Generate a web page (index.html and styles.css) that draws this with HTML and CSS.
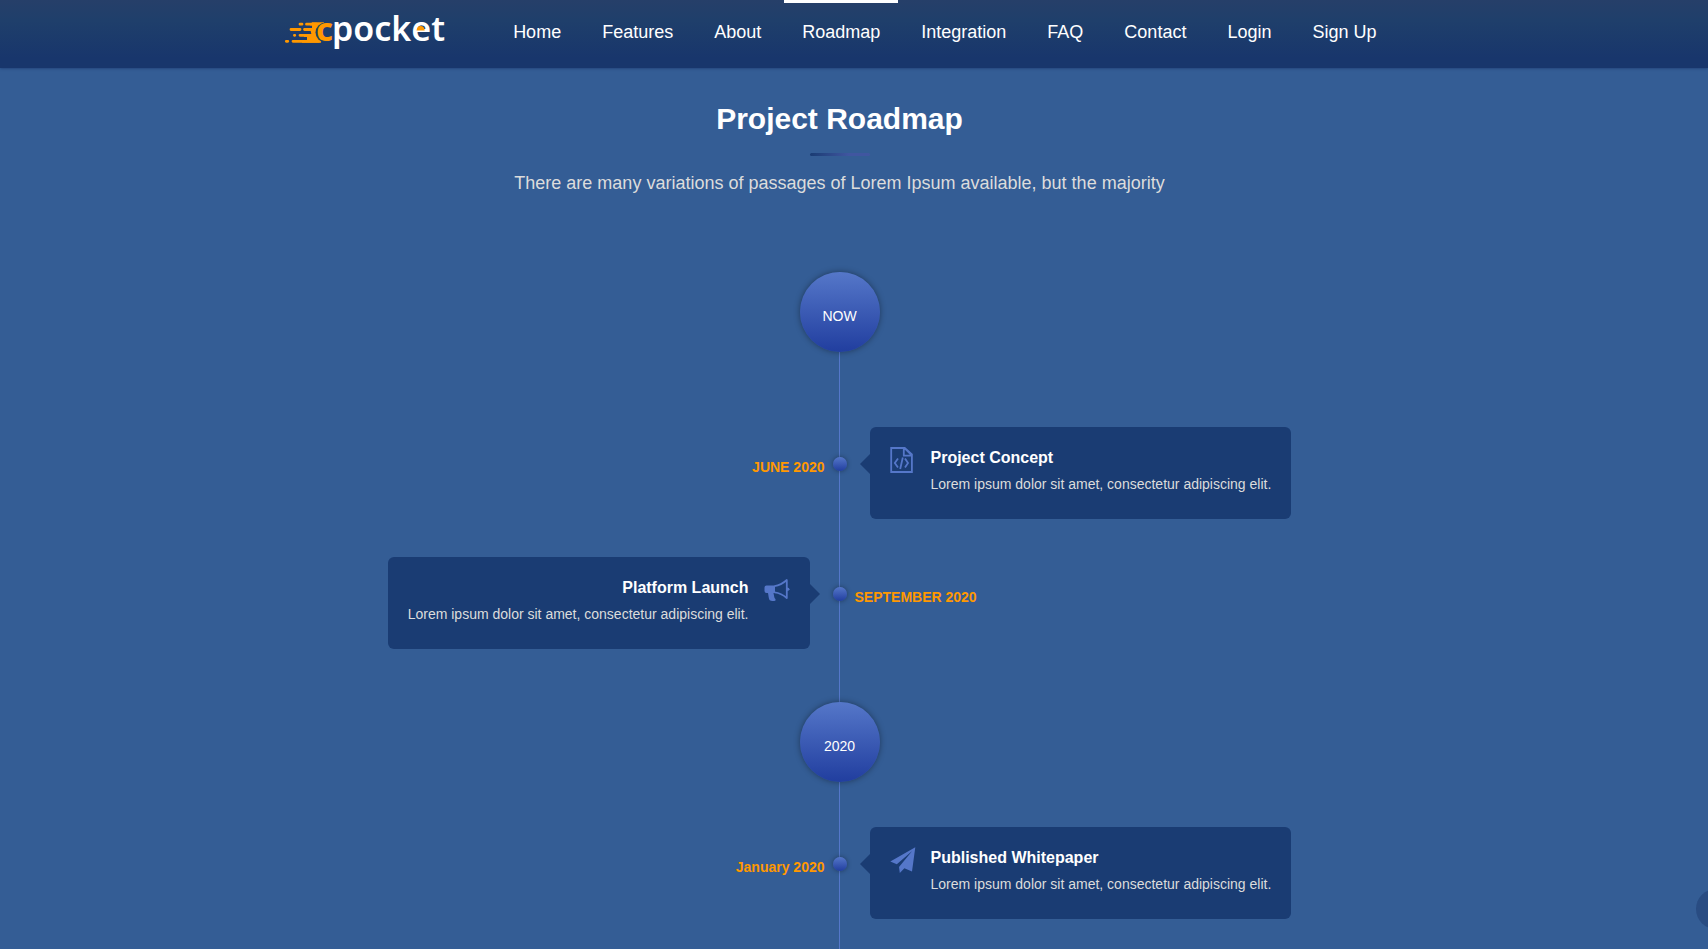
FILE: index.html
```html
<!DOCTYPE html>
<html lang="en">
<head>
<meta charset="utf-8">
<meta name="viewport" content="width=device-width, initial-scale=1">
<title>Cpocket</title>
<link rel="stylesheet" href="styles.css">
</head>
<body>
<header class="header">
  <div class="container header-inner">
    <a class="logo" href="#" aria-label="cpocket">
      <svg width="162" height="36" viewBox="0 0 162 36">
        <path fill="none" stroke="#ff9800" stroke-width="2.800" stroke-linecap="round" d="M15 10.200h2M21.500 10.200h10M6 15.500h9M19.500 15.500h10M9.400 21.300h.4M15 21.300h16M1.300 27.300h1.500M8 27.300h26"/>
        <path fill="#ff9800" d="M27 8.200H39L36 28.700H17v-2.800h5v-3h-3v-3h9v-3h-7v-2.800h6v-2.600h-2z"/>
        <path fill="#ff9800" d="M25 14h8v14H23v-5h4z"/>
        <circle class="logo-gap" cx="40.500" cy="18.500" r="10"/>
        <text class="logo-c" x="31" y="27">c</text>
        <text class="logo-text" x="47" y="27">pocket</text>
        <path fill="#ff9800" d="M131.500 16.400q.7-4.400 4.200-4.400t4 4.400z"/>
      </svg>
    </a>
    <nav class="nav">
      <a href="#">Home</a>
      <a href="#">Features</a>
      <a href="#">About</a>
      <a class="active" href="#">Roadmap</a>
      <a href="#">Integration</a>
      <a href="#">FAQ</a>
      <a href="#">Contact</a>
      <a href="#">Login</a>
      <a href="#">Sign Up</a>
    </nav>
  </div>
</header>
<main class="container main">
  <div class="heading">
    <h1>Project Roadmap</h1>
    <div class="rule"></div>
    <p>There are many variations of passages of Lorem Ipsum available, but the majority</p>
  </div>
  <section class="timeline">
    <div class="year first">NOW</div>
    <article class="event right">
      <time class="date">JUNE 2020</time>
      <span class="dot"></span>
      <div class="card">
        <svg class="icon" width="26" height="26" viewBox="0 0 26 26" fill="none" stroke="#5577c9" stroke-width="1.800">
          <path d="M1.200 1h13.500l7.200 6.500V25H1.200zM13.800 1v7.700H21.700M14.500 1.200l7 7M8 11.500L4.800 16 8 20.500M15 11.500L18 16l-3 4.500M12.800 10.500L10.200 22"/>
        </svg>
        <div><h2>Project Concept</h2><p>Lorem ipsum dolor sit amet, consectetur adipiscing elit.</p></div>
      </div>
    </article>
    <article class="event left">
      <time class="date">SEPTEMBER 2020</time>
      <span class="dot"></span>
      <div class="card">
        <svg class="icon" width="26" height="26" viewBox="0 0 26 26">
          <path fill="#5577c9" d="M2.500 8.500H11V16H9.500l.5 2.500c.3 2 .6 3 1.500 3.500v1.500C9.500 24.500 7 24 5.500 23 4.500 21 4.500 18 4 16H2.500Q.5 16 .5 14v-3.500Q.5 8.500 2.500 8.500z"/>
          <path fill="none" stroke="#5577c9" stroke-width="1.800" stroke-linejoin="round" d="M10.500 9.200C15 8.500 19.500 6 22.800 3v18C19.500 18 15 15.800 10.500 15.300"/>
          <path fill="#5577c9" d="M23 10.500q2.500 0 2.500 1.700T23 14z"/>
        </svg>
        <div><h2>Platform Launch</h2><p>Lorem ipsum dolor sit amet, consectetur adipiscing elit.</p></div>
      </div>
    </article>
    <div class="year">2020</div>
    <article class="event right">
      <time class="date">January 2020</time>
      <span class="dot"></span>
      <div class="card">
        <svg class="icon" width="26" height="26" viewBox="0 0 26 26" fill="#5577c9">
          <path d="M25.300.300L22 24.500l-7.600-3.200L9.800 26 9 20 22.200 4 6.800 17.300.300 14.600z"/>
        </svg>
        <div><h2>Published Whitepaper</h2><p>Lorem ipsum dolor sit amet, consectetur adipiscing elit.</p></div>
      </div>
    </article>
  </section>
</main>
<a class="to-top" href="#" aria-label="Back to top"></a>
</body>
</html>
```
FILE: styles.css
```css
* { box-sizing: border-box; }
body {
  margin: 0;
  min-height: 100vh;
  display: flex;
  flex-direction: column;
  padding-right: 29px;
  overflow: hidden;
  background: #345d95;
  color: #fff;
  font-family: "Liberation Sans", Arial, sans-serif;
}
h1, h2, p { margin: 0; }
.container { width: 100%; max-width: 1140px; margin: 0 auto; padding: 0 15px; }
.header {
  margin-right: -29px;
  padding-right: 29px;
  background: linear-gradient(#263f69, #1f3f6b 30%, #18366c 85%);
  box-shadow: 0 0 3px #18366c;
}
.header-inner { display: flex; justify-content: space-between; align-items: flex-start; }
.logo { display: block; padding-top: 14px; }
.logo svg { display: block; overflow: visible; }
.logo-text, .logo-c { font-family: "Noto Sans", sans-serif; font-size: 34px; font-weight: 600; fill: #fff; }
.logo-c { font-size: 33px; font-weight: 700; fill: #ff9800; }
.logo-gap { fill: #1e3d6b; }
.nav { display: flex; gap: 5px; }
.nav a {
  padding: 17px 18px 24px;
  border-top: 3px solid transparent;
  color: #fff;
  font-size: 18px;
  line-height: 24px;
  text-decoration: none;
  white-space: nowrap;
}
.nav a.active { border-color: #fff; }
.main { flex: 1; display: flex; flex-direction: column; }
.heading { display: flex; flex-direction: column; align-items: center; padding: 32px 0 76px; text-align: center; }
.heading h1 { font-size: 30px; line-height: 38px; }
.rule { width: 60px; height: 3px; margin: 15px 0; border-radius: 2px; background: linear-gradient(90deg, #1a3c73, #4056a0 65%, #4056a0); }
.heading p { color: #dcdcdc; font-size: 18px; line-height: 25px; }
.timeline { position: relative; flex: 1; display: flex; flex-direction: column; padding-bottom: 30px; }
.timeline::before { content: ""; position: absolute; top: 0; bottom: 0; left: calc(50% - 1px); width: 1px; background: #5577c9; }
.year {
  position: relative;
  align-self: center;
  display: flex;
  align-items: center;
  justify-content: center;
  width: 80px;
  height: 80px;
  margin: 15px 0 45px;
  padding-top: 8px;
  border-radius: 50%;
  background: linear-gradient(#5577c9, #213e9f);
  box-shadow: 0 0 6px rgba(0, 0, 0, .4);
  font-size: 14px;
}
.year.first { margin: 0 0 75px; }
.event { position: relative; display: grid; grid-template-columns: 1fr 1fr; margin-bottom: 38px; }
.date { grid-row: 1; padding: 30px 15px 0; color: #ff9800; font-size: 14px; font-weight: 700; line-height: 20px; }
.right .date { text-align: right; }
.left .date { grid-column: 2; }
.dot {
  position: absolute;
  top: 30px;
  left: calc(50% - 7px);
  width: 14px;
  height: 14px;
  border-radius: 50%;
  background: linear-gradient(#5577c9, #213e9f);
  box-shadow: 0 0 5px rgba(0, 0, 0, .4);
}
.card {
  position: relative;
  grid-row: 1;
  display: flex;
  gap: 15px;
  width: fit-content;
  padding: 20px 20px 22px;
  border-radius: 6px;
  background: #1a3c73;
}
.right .card { grid-column: 2; margin-left: 30px; }
.left .card { grid-column: 1; flex-direction: row-reverse; justify-self: end; margin-right: 30px; text-align: right; }
.card::before { content: ""; position: absolute; top: 27px; border: 10px solid transparent; }
.right .card::before { right: 100%; border-left: 0; border-right-color: #1a3c73; }
.left .card::before { left: 100%; border-right: 0; border-left-color: #1a3c73; }
.icon { flex: none; }
.card h2 { font-size: 16px; line-height: 22px; }
.card p { margin-top: 2px; color: #dcdcdc; font-size: 14px; line-height: 26px; }
.to-top { position: fixed; right: -28px; bottom: 20px; width: 40px; height: 40px; border-radius: 50%; background: #294c82; }
```
